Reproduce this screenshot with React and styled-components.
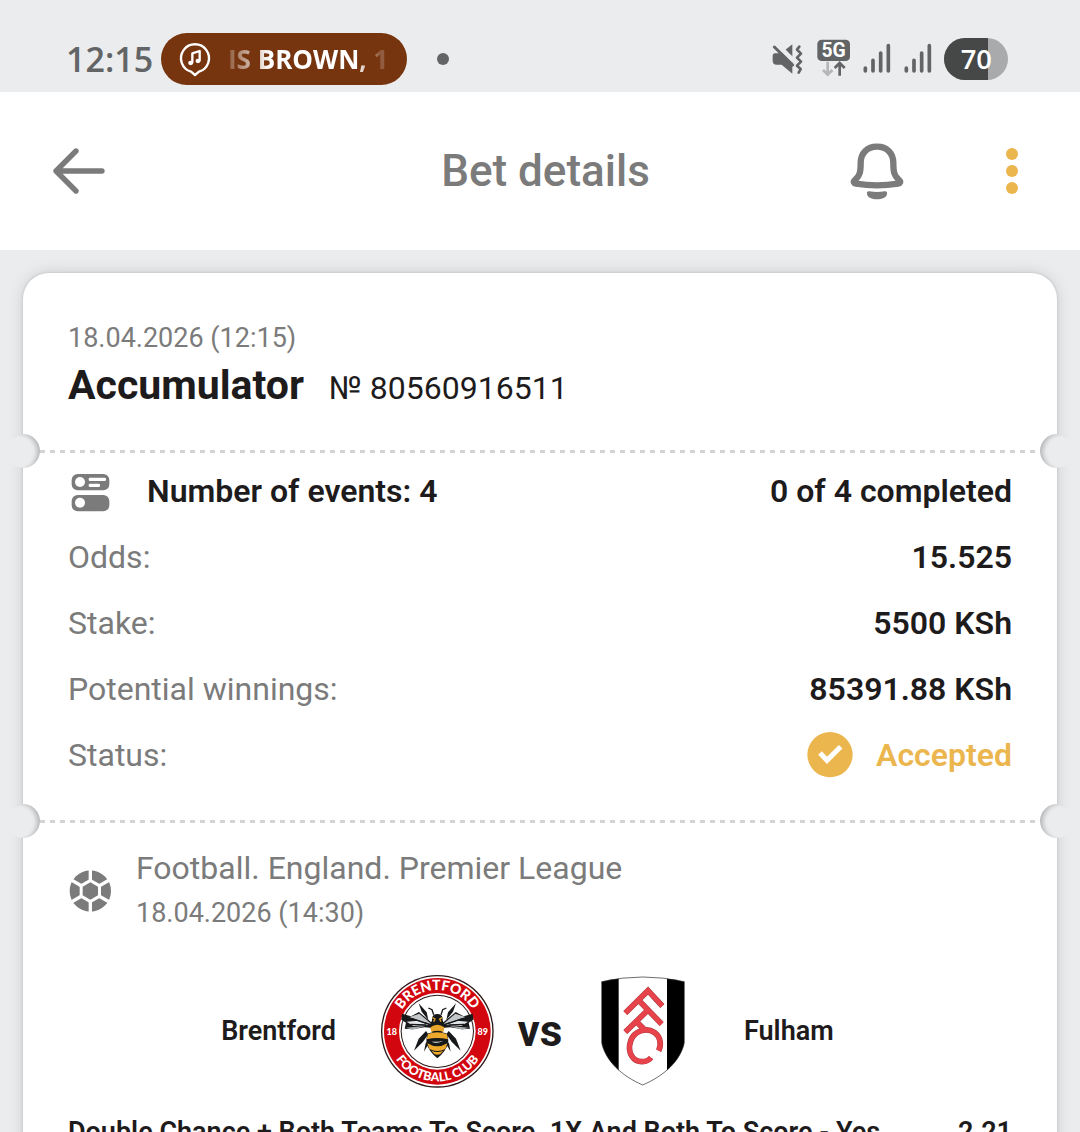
import React from 'react'
import styled, { createGlobalStyle } from 'styled-components'

const GlobalStyle = createGlobalStyle`
  * {
    box-sizing: border-box;
  }

  html {
    scrollbar-width: none;
  }

  body {
    margin: 0;
    background: #ebecee;
    color: #1e1b1c;
    font-family: Roboto, 'Noto Sans', sans-serif;
  }

  h1, h2, p, dl, dt, dd {
    margin: 0;
    font-weight: 400;
  }
`

const Screen = styled.div`
  height: 100vh;
  overflow-y: auto;
  scrollbar-width: none;
`

const StatusBar = styled.div`
  display: flex;
  align-items: center;
  height: 92px;
  padding: 26px 72px 0 66px;
  background: #ebecee;
  color: #626465;
  font-family: 'Open Sans', sans-serif;
`

const Clock = styled.span`
  width: 95px;
  font-size: 34px;
  font-weight: 600;
  line-height: 48px;
  white-space: nowrap;
`

const NowPlaying = styled.div`
  display: flex;
  align-items: center;
  gap: 16px;
  width: 246px;
  height: 52px;
  padding: 0 18px 0 17px;
  border-radius: 26px;
  background: #76340f;
`

const Track = styled.span`
  flex: 1;
  color: #fff;
  font-size: 26px;
  font-weight: 700;
  line-height: 40px;
  white-space: nowrap;
  mask-image: linear-gradient(90deg, rgba(0, 0, 0, 0.2), #000 26%, #000 80%, rgba(0, 0, 0, 0.2) 94%);
`

const Dot = styled.span`
  width: 12px;
  height: 12px;
  margin-left: 30px;
  border-radius: 50%;
  background: #626465;
`

const Indicators = styled.div`
  display: flex;
  align-items: center;
  gap: 11px;
  margin-left: auto;
`

const Icon = styled.svg`
  display: block;
  flex: none;
  width: ${({ $w }) => $w}px;
  height: ${({ $h }) => $h}px;
`

const Header = styled.header`
  display: grid;
  grid-template-columns: 1fr auto 1fr;
  align-items: center;
  height: 158px;
  padding: 0 41px 0 52px;
  background: #fff;
  color: #7b7b7b;
`

const Title = styled.h1`
  font-size: 44px;
  font-weight: 500;
  line-height: 56px;
`

const HeaderActions = styled.div`
  display: flex;
  align-items: center;
  justify-content: flex-end;
  gap: 81px;
`

const IconButton = styled.button`
  display: flex;
  align-items: center;
  justify-content: center;
  width: 54px;
  height: 60px;
  padding: 0;
  border: none;
  background: none;
  color: inherit;
  cursor: pointer;
`

const Ticket = styled.main`
  margin: 23px 23px 0;
  border-radius: 26px;
  background: #fff;
  box-shadow: 0 0 3px rgba(0, 0, 0, 0.16), 0 0 16px rgba(0, 0, 0, 0.13);
`

const Summary = styled.section`
  padding: 49px 45px 21px;
`

const DateText = styled.p`
  color: #7b7b7b;
  font-size: 27px;
  line-height: 32px;
`

const BetName = styled.div`
  display: flex;
  align-items: baseline;
  gap: 25px;
  padding-top: 6px;
  line-height: 50px;
`

const BetType = styled.h2`
  font-size: 41px;
  font-weight: 700;
`

const BetNumber = styled.span`
  font-size: 32px;
`

const Perforation = styled.div`
  display: flex;
  align-items: center;
  margin: 0 -17px;
`

const Notch = styled.span`
  width: 34px;
  height: 34px;
  border-radius: 50%;
  background: #ebecee;
  box-shadow: inset ${({ $right }) => ($right ? '5px' : '-5px')} 1px 4px -2px rgba(0, 0, 0, 0.22);
`

const Dashes = styled.span`
  flex: 1;
  height: 3px;
  background: repeating-linear-gradient(90deg, #d2d3d5 0 5px, transparent 5px 10px);
`

const Details = styled.dl`
  display: grid;
  gap: 20px;
  padding: 0 45px 26px;
`

const DetailRow = styled.div`
  display: flex;
  align-items: center;
  justify-content: space-between;
  height: 46px;
  font-size: 32px;
  line-height: 46px;
`

const Label = styled.dt`
  display: flex;
  align-items: center;
  gap: 35px;
  color: ${({ $strong }) => ($strong ? '#1e1b1c' : '#7b7b7b')};
  font-weight: ${({ $strong }) => ($strong ? 600 : 400)};
`

const Value = styled.dd`
  display: flex;
  align-items: center;
  gap: 23px;
  color: ${({ $accent }) => ($accent ? '#ecb64e' : '#1e1b1c')};
  font-weight: 600;
`

const Event = styled.section`
  padding: 8px 45px 40px;
`

const League = styled.div`
  display: flex;
  align-items: center;
  gap: 24px;

  p {
    line-height: 45px;
  }
`

const LeagueName = styled.p`
  color: #7b7b7b;
  font-size: 32px;
`

const Match = styled.div`
  display: grid;
  grid-template-columns: 1fr 114px 92px 114px 1fr;
  align-items: center;
  margin-top: 38px;
`

const Team = styled.span`
  padding: 0 44px;
  font-size: 27px;
  font-weight: 600;
  text-align: ${({ $home }) => ($home ? 'right' : 'left')};
`

const Versus = styled.span`
  font-size: 44px;
  font-weight: 700;
  text-align: center;
`

const Market = styled.div`
  display: flex;
  justify-content: space-between;
  margin-top: 24px;
  font-size: 27px;
  font-weight: 600;
  line-height: 40px;
`

const MusicIcon = () => (
  <Icon $w={34} $h={36} viewBox="384 60 102 108" fill="none" stroke="#fff" strokeWidth="7" strokeLinecap="round" strokeLinejoin="round">
    <path d="M423 152a42 42 0 1 1 24 0l-12 10z" />
    <path d="M427 124V97l22-7v28" />
    <ellipse cx="422" cy="126" rx="4" ry="3" />
    <ellipse cx="444" cy="120" rx="4" ry="3" />
  </Icon>
)

const MuteIcon = () => (
  <Icon $w={34} $h={32} viewBox="34 52 102 96">
    <path d="M46 83h18l34-27v88L66 117H51q-12 0-12-12V92q0-9 7-9z" fill="#626465" />
    <path d="M52 56l50 50" stroke="#ebecee" strokeWidth="14" />
    <path d="M44 64l55 54" stroke="#626465" strokeWidth="9" strokeLinecap="round" />
    <path d="M119 63l-7 9 12 12-12 12 12 12-12 12 11 10-6 11" fill="none" stroke="#626465" strokeWidth="8" strokeLinecap="round" strokeLinejoin="round" />
  </Icon>
)

const NetworkIcon = () => (
  <Icon $w={35} $h={40} viewBox="173 40 105 120">
    <rect x="177" y="42" width="98" height="64" rx="13" fill="#626465" />
    <text x="226" y="94" textAnchor="middle" fontFamily="Roboto, sans-serif" fontSize="58" fontWeight="700" fill="#fff">5G</text>
    <path d="M208 108v38M194 133l14 14 14-14" fill="none" stroke="#b5b6b8" strokeWidth="8" />
    <path d="M244 150v-38M229 127l15-15 15 15" fill="none" stroke="#626465" strokeWidth="8" />
  </Icon>
)

const SignalIcon = () => (
  <Icon $w={30} $h={32} viewBox="311 54 90 96" stroke="#626465" strokeWidth="11" strokeLinecap="round">
    <path d="M321 129v9M344 106v32M367 84v54M390 62v76" />
  </Icon>
)

const BatteryIcon = () => (
  <Icon $w={64} $h={42} viewBox="552 39 192 126">
    <clipPath id="battery">
      <rect x="552" y="39" width="192" height="126" rx="63" />
    </clipPath>
    <g clipPath="url(#battery)">
      <rect x="552" y="39" width="192" height="126" fill="#a9aaab" />
      <rect x="552" y="39" width="132" height="126" fill="#464847" />
    </g>
    <text x="649" y="131" textAnchor="middle" fontFamily="'Open Sans', sans-serif" fontSize="82" fontWeight="600" fill="#fff">70</text>
  </Icon>
)

const BackIcon = () => (
  <Icon $w={54} $h={50} viewBox="66 48 162 150" fill="none" stroke="currentColor" strokeWidth="16" strokeLinecap="round" strokeLinejoin="round">
    <path d="M138 63l-60 60 60 60M78 123h138" />
  </Icon>
)

const BellIcon = () => (
  <Icon $w={54} $h={60} viewBox="30 33 162 180">
    <path
      d="M111 50C81 50 62 70 62 99c0 28-3 38-16 50-8 7-4 11 2 12q63 10 126 0c6-1 10-5 2-12-13-12-16-22-16-50 0-29-19-49-49-49z"
      fill="none"
      stroke="currentColor"
      strokeWidth="19"
      strokeLinejoin="round"
    />
    <path d="M88 184q23 4 46 0c6-1 8 3 7 8-2 21-58 21-60 0-1-5 1-9 7-8z" fill="currentColor" />
  </Icon>
)

const MoreIcon = () => (
  <Icon $w={12} $h={46} viewBox="0 0 12 46" fill="#ecb64e">
    <circle cx="6" cy="6" r="6" />
    <circle cx="6" cy="23" r="6" />
    <circle cx="6" cy="40" r="6" />
  </Icon>
)

const EventsIcon = () => (
  <Icon $w={44} $h={44} viewBox="204 657 132 132">
    <rect x="215" y="672" width="113" height="49" rx="18" fill="#7b7b7b" />
    <rect x="215" y="735" width="113" height="49" rx="18" fill="#7b7b7b" />
    <g fill="#fff">
      <circle cx="240" cy="696" r="15" />
      <circle cx="240" cy="758" r="15" />
      <rect x="266" y="683" width="52" height="10" rx="4" />
      <rect x="266" y="701" width="34" height="10" rx="4" />
    </g>
  </Icon>
)

const AcceptedIcon = () => (
  <Icon $w={46} $h={46} viewBox="79 34 138 138">
    <circle cx="148" cy="102" r="68" fill="#ecb64e" />
    <path d="M118 97l21 22 41-41" fill="none" stroke="#fff" strokeWidth="15" />
  </Icon>
)

const FootballIcon = () => (
  <Icon $w={44} $h={44} viewBox="55 55 132 132">
    <circle cx="122" cy="121" r="62" fill="#7b7b7b" />
    <g stroke="#fff" strokeWidth="10">
      <path d="M122 55v132M65 88l114 66M65 154l114-66" />
    </g>
    <path d="M122 84l32 18v38l-32 18-32-18v-38z" fill="#fff" />
    <path d="M122 95l23 13v26l-23 13-23-13v-26z" fill="#7b7b7b" />
  </Icon>
)

const wing = (
  <>
    <path d="M191 178l-44-37-24 13-27-8-2 18 14 9-4 18 22 2 38-6 24 2z" fill="#17181a" />
    <path d="M118 156l30-10 36 31-30-8z" fill="#c3c7c9" />
    <path d="M110 170l32-3 34 13-46 3z" fill="#e4e6e7" />
    <path d="M107 188l26-2 34-4-38 12z" fill="#a9aeb1" />
    <path d="M126 161l46 15M121 178l48 2" stroke="#17181a" strokeWidth="4" fill="none" />
    <path d="M170 142l-24-27 9 25 20 25M168 198l-22 23-14 36 27-27 16-22" fill="#17181a" />
    <path d="M181 220l-14 15-5 25 10-17 15-11" fill="#17181a" />
  </>
)

const BrentfordCrest = () => (
  <Icon $w={114} $h={114} viewBox="30 27 342 342" role="img" aria-label="Brentford crest">
    <circle cx="202" cy="199" r="169" fill="#2a1716" />
    <circle cx="202" cy="199" r="165" fill="#fff" />
    <circle cx="202" cy="199" r="160" fill="#d2060f" />
    <circle cx="202" cy="199" r="115" fill="#fff" />
    <circle cx="202" cy="199" r="110" fill="#2a1716" />
    <circle cx="202" cy="199" r="107" fill="#fff" />
    <path id="crestTop" d="M78 199a124 124 0 0 1 248 0" fill="none" />
    <path id="crestBottom" d="M52 199a150 150 0 0 0 300 0" fill="none" />
    <g fill="#fff" fontFamily="Lato, sans-serif" fontWeight="900" textAnchor="middle">
      <text fontSize="42"><textPath href="#crestTop" startOffset="50%">BRENTFORD</textPath></text>
      <text fontSize="37"><textPath href="#crestBottom" startOffset="50%">FOOTBALL CLUB</textPath></text>
      <text x="65" y="209" fontSize="27">18</text>
      <text x="338" y="209" fontSize="27">89</text>
    </g>
    {wing}
    <g transform="translate(404 0) scale(-1 1)">{wing}</g>
    <path d="M191 149l-5-15-11-5M213 149l5-15 11-5" fill="none" stroke="#17181a" strokeWidth="4" />
    <path d="M186 166q-1-19 16-19t16 19l7 17-9 22h-28l-9-22z" fill="#17181a" />
    <path d="M187 158l8 4-4 8M217 158l-8 4 4 8" fill="none" stroke="#e8a72c" strokeWidth="4" />
    <path d="M181 187q21-15 42 0l-3 14q-18-8-36 0z" fill="#e8a72c" />
    <path d="M175 205q27-10 54 0 8 14 5 30-5 23-32 45-27-22-32-45-3-16 5-30z" fill="#17181a" />
    <path d="M174 207q28-11 56 0l4 16q-32-8-64 0z" fill="#eca92b" />
    <path d="M172 235q30 18 60 0l-6 17q-24 12-48 0z" fill="#eca92b" />
    <path d="M184 257q18 8 36 0l-9 10q-9 4-18 0z" fill="#eca92b" />
    <path d="M184 230q18 8 36-3-18 5-36 3z" fill="#fff" />
  </Icon>
)

const FulhamMonogram = ({ color, width }) => (
  <g fill="none" stroke={color} strokeWidth={width}>
    <path d="M106 144l68-67 43 46" />
    <path d="M146 106l69 71" />
    <path d="M106 201l68-66" />
    <path d="M139 170l26 25" />
    <path d="M206 257c10-20 4-43-12-54-26-18-62-4-72 25-12 36 9 63 35 62 12 0 20-4 26-12" />
  </g>
)

const FulhamCrest = () => (
  <Icon $w={114} $h={114} viewBox="-12 27 342 342" role="img" aria-label="Fulham crest">
    <clipPath id="shield">
      <path d="M35 50q123-28 248 0v183c-12 56-62 100-125 127C96 333 47 289 35 233z" />
    </clipPath>
    <g clipPath="url(#shield)">
      <rect x="30" y="30" width="260" height="340" fill="#fff" />
      <rect x="30" y="30" width="56" height="340" fill="#000" />
      <rect x="231" y="30" width="56" height="340" fill="#000" />
    </g>
    <path d="M35 50q123-28 248 0v183c-12 56-62 100-125 127C96 333 47 289 35 233z" fill="none" stroke="#222" strokeWidth="2" />
    <FulhamMonogram color="#a8383d" width="17" />
    <FulhamMonogram color="#e8424a" width="14" />
  </Icon>
)

const details = [
  { label: 'Odds:', value: '15.525' },
  { label: 'Stake:', value: '5500 KSh' },
  { label: 'Potential winnings:', value: '85391.88 KSh' },
]

const Divider = () => (
  <Perforation>
    <Notch />
    <Dashes />
    <Notch $right />
  </Perforation>
)

const App = () => {
  return (
    <Screen>
      <GlobalStyle />
      <StatusBar>
        <Clock>12:15</Clock>
        <NowPlaying>
          <MusicIcon />
          <Track>IS BROWN, 1</Track>
        </NowPlaying>
        <Dot />
        <Indicators>
          <MuteIcon />
          <NetworkIcon />
          <SignalIcon />
          <SignalIcon />
          <BatteryIcon />
        </Indicators>
      </StatusBar>

      <Header>
        <IconButton aria-label="Back">
          <BackIcon />
        </IconButton>
        <Title>Bet details</Title>
        <HeaderActions>
          <IconButton aria-label="Notifications">
            <BellIcon />
          </IconButton>
          <IconButton aria-label="More">
            <MoreIcon />
          </IconButton>
        </HeaderActions>
      </Header>

      <Ticket>
        <Summary>
          <DateText>18.04.2026 (12:15)</DateText>
          <BetName>
            <BetType>Accumulator</BetType>
            <BetNumber>№ 80560916511</BetNumber>
          </BetName>
        </Summary>

        <Divider />

        <Details>
          <DetailRow>
            <Label $strong>
              <EventsIcon />
              Number of events: 4
            </Label>
            <Value>0 of 4 completed</Value>
          </DetailRow>
          {details.map(({ label, value }) => (
            <DetailRow key={label}>
              <Label>{label}</Label>
              <Value>{value}</Value>
            </DetailRow>
          ))}
          <DetailRow>
            <Label>Status:</Label>
            <Value $accent>
              <AcceptedIcon />
              Accepted
            </Value>
          </DetailRow>
        </Details>

        <Divider />

        <Event>
          <League>
            <FootballIcon />
            <div>
              <LeagueName>Football. England. Premier League</LeagueName>
              <DateText>18.04.2026 (14:30)</DateText>
            </div>
          </League>
          <Match>
            <Team $home>Brentford</Team>
            <BrentfordCrest />
            <Versus>vs</Versus>
            <FulhamCrest />
            <Team>Fulham</Team>
          </Match>
          <Market>
            <span>Double Chance + Both Teams To Score. 1X And Both To Score - Yes</span>
            <span>2.21</span>
          </Market>
        </Event>
      </Ticket>
    </Screen>
  )
}

export default App
